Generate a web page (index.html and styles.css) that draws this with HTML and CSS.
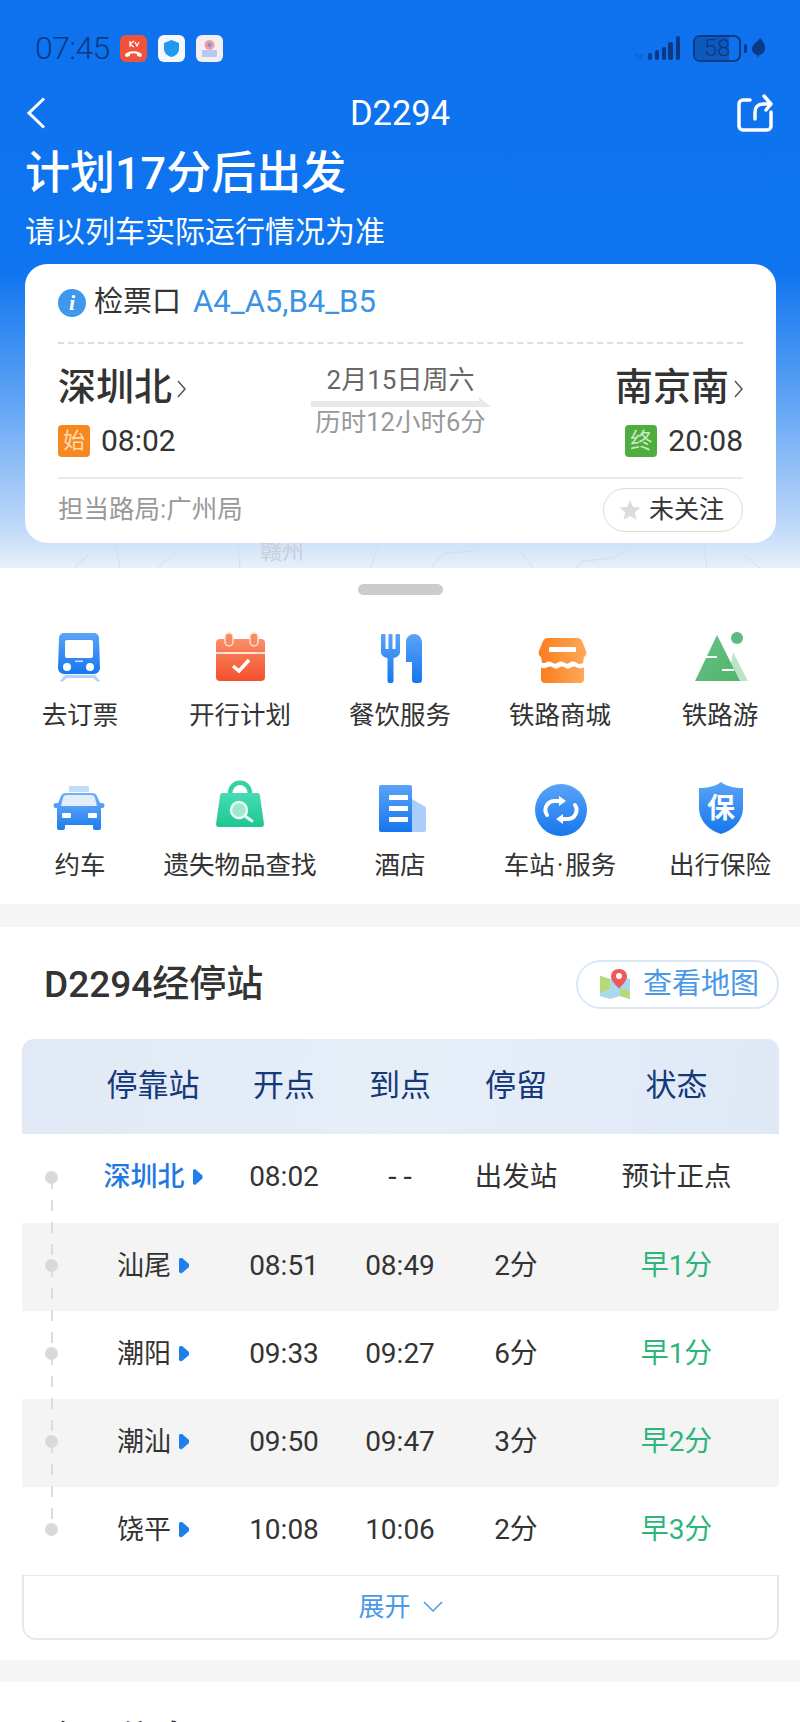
FILE: index.html
```html
<!DOCTYPE html>
<html lang="zh-CN">
<head>
<meta charset="utf-8">
<title>D2294</title>
<link rel="stylesheet" href="styles.css">
</head>
<body>
<div class="page">
  <div class="hero">
    <svg class="map-lines" width="800" height="26" viewBox="0 543 800 26">
      <path d="M74 568L97 547M115 543L120 568M158 568L184 543M238 543L240 568M380 543L370 568M431 568L444 553L474 551L477 543M515 543L533 568M576 568L581 562L615 557L638 543M704 543L707 568M730 543L760 568"/>
    </svg>
    <span class="map-city">赣州</span>

    <div class="status">
      <span class="clock">07:45</span>
      <svg class="app" width="27" height="27" viewBox="0 0 27 27"><rect width="27" height="27" rx="6" fill="#f0533a"/><path d="M10 6v6M14 6l-4 3 4 3M15 7l2 4 2-4" fill="none" stroke="#fff" stroke-width="1.2"/><path d="M5 20c2-5 15-5 17 0l-1 2-4-1v-2c-2-1-5-1-7 0v2l-4 1z" fill="#fff"/></svg>
      <svg class="app" width="27" height="27" viewBox="0 0 27 27"><rect width="27" height="27" rx="6" fill="#f4f8fd"/><path d="M13.5 5l7.5 3v6c0 4-3.500 7-7.500 8-4-1-7.500-4-7.500-8V8z" fill="#1e9bf0"/></svg>
      <svg class="app" width="27" height="27" viewBox="0 0 27 27"><rect width="27" height="27" rx="6" fill="#f4eef0"/><circle cx="13.500" cy="10" r="5" fill="#e8a0a8"/><circle cx="13.500" cy="10" r="2" fill="#7d8fd8"/><rect x="6" y="15" width="15" height="7" rx="1" fill="#b8c8ee"/></svg>
      <span class="status-space"></span>
      <svg class="signal" width="46" height="26" viewBox="0 0 46 26"><text x="0" y="24" class="signal-text">1s</text><g fill="#0a3a85"><rect x="13" y="18" width="4" height="7" rx="2"/><rect x="20" y="15" width="4" height="10" rx="2"/><rect x="27" y="12" width="4" height="13" rx="2"/><rect x="33" y="7" width="5" height="18" rx="2"/><rect x="41" y="1" width="4" height="24" rx="2"/></g></svg>
      <span class="battery"><span class="battery-fill"></span><span class="battery-num">58</span></span>
      <span class="battery-nub"></span>
      <svg class="leaf" width="13" height="20" viewBox="0 0 13 20"><path d="M8 0c3 3 5 6 5 10 0 4-3 7-6 7l-1 3-1-3c-3-1-5-3-5-6 0-5 5-6 8-11z" fill="#0a3a85"/></svg>
    </div>

    <div class="nav">
      <svg class="back" width="20" height="32" viewBox="0 0 20 32"><path d="M18 1.500L3 16l15 14.500" fill="none" stroke="#fff" stroke-width="3"/></svg>
      <span class="nav-title">D2294</span>
      <svg class="share" width="38" height="38" viewBox="0 0 38 38"><path d="M14 6H7a4 4 0 0 0-4 4v22a4 4 0 0 0 4 4h24a4 4 0 0 0 4-4V18" fill="none" stroke="#fff" stroke-width="3.500" stroke-linecap="round"/><path d="M19 25v-7c0-5 3-8 8-8h8M28 2l7 8-5 6" fill="none" stroke="#fff" stroke-width="3.500" stroke-linecap="round" stroke-linejoin="round"/></svg>
    </div>

    <h1 class="headline">计划17分后出发</h1>
    <p class="subline">请以列车实际运行情况为准</p>

    <section class="ticket">
      <div class="gate">
        <span class="info">i</span>
        <span class="gate-label">检票口</span>
        <span class="gate-value">A4_A5,B4_B5</span>
      </div>
      <div class="dash"></div>
      <div class="route">
        <div class="stop">
          <div class="stop-name">深圳北<svg class="stop-arrow" width="9" height="20" viewBox="0 0 9 20"><path d="M1 2l7 8-7 8" fill="none" stroke="#555" stroke-width="1.500"/></svg></div>
          <div class="stop-time"><span class="tag tag-start">始</span><span class="clock-time">08:02</span></div>
        </div>
        <div class="route-mid">
          <div class="route-date">2月15日周六</div>
          <svg class="route-arrow" width="180" height="10" viewBox="0 0 180 10"><polygon points="0,4 168,4 168,0 180,10 0,10" fill="#e8e8e8"/></svg>
          <div class="route-span">历时12小时6分</div>
        </div>
        <div class="stop stop-end">
          <div class="stop-name">南京南<svg class="stop-arrow" width="9" height="20" viewBox="0 0 9 20"><path d="M1 2l7 8-7 8" fill="none" stroke="#555" stroke-width="1.500"/></svg></div>
          <div class="stop-time"><span class="tag tag-end">终</span><span class="clock-time">20:08</span></div>
        </div>
      </div>
      <div class="rule"></div>
      <div class="ticket-foot">
        <span class="bureau">担当路局:广州局</span>
        <span class="follow"><svg width="22" height="22" viewBox="0 0 22 22"><path d="M11 1l3 7 7.500.6-5.700 4.900 1.800 7.500L11 17l-6.600 4 1.800-7.500L.5 8.600 8 8z" fill="#dcdcdc"/></svg>未关注</span>
      </div>
    </section>
  </div>

  <section class="sheet">
    <div class="handle"></div>
    <div class="services">
      <div class="service">
        <svg width="56" height="56" viewBox="0 0 56 56"><defs><linearGradient id="b1" x1="0" y1="0" x2="0" y2="1"><stop offset="0" stop-color="#5aa3f8"/><stop offset="1" stop-color="#1677ee"/></linearGradient></defs><path d="M13 45h30l5 6-2 1-5-4H15l-5 4-2-1z" fill="#b4d3f9"/><path d="M12 3h30a5 5 0 0 1 5 5l1 30a6 6 0 0 1-6 6H12a6 6 0 0 1-6-6l1-30a5 5 0 0 1 5-5z" fill="url(#b1)"/><rect x="13" y="10" width="28" height="18" rx="2" fill="#fff"/><circle cx="15" cy="37" r="4" fill="#fff"/><circle cx="38" cy="37" r="4" fill="#fff"/><rect x="23" y="30.500" width="8" height="1.500" fill="#cfe2fb"/></svg>
        <span>去订票</span>
      </div>
      <div class="service">
        <svg width="56" height="56" viewBox="0 0 56 56"><defs><linearGradient id="r1" x1="0" y1="0" x2="0" y2="1"><stop offset="0" stop-color="#f98f68"/><stop offset="1" stop-color="#f4502c"/></linearGradient></defs><rect x="4" y="9" width="49" height="42" rx="4" fill="url(#r1)"/><path d="M4 23h49" stroke="#ffe4da" stroke-width="2"/><rect x="13" y="3" width="8" height="13" rx="4" fill="#f88a62" stroke="#fde0d4" stroke-width="1.500"/><rect x="38" y="3" width="8" height="13" rx="4" fill="#f88a62" stroke="#fde0d4" stroke-width="1.500"/><path d="M21 36l6 5 10-11" fill="none" stroke="#fff" stroke-width="3.500"/></svg>
        <span>开行计划</span>
      </div>
      <div class="service">
        <svg width="56" height="56" viewBox="0 0 56 56"><defs><linearGradient id="b2" x1="0" y1="0" x2="0" y2="1"><stop offset="0" stop-color="#5aa3f8"/><stop offset="1" stop-color="#1677ee"/></linearGradient></defs><path d="M9 5a1 1 0 0 1 1-1h2.500a1 1 0 0 1 1 1v14h3V5a1 1 0 0 1 1-1h2a1 1 0 0 1 1 1v14h3V5a1 1 0 0 1 1-1H27a1 1 0 0 1 1 1v17c0 3-3 5.500-6.500 6v23a2 2 0 0 1-2 2h-2a2 2 0 0 1-2-2V28C12 27.500 9 25 9 22z" fill="url(#b2)"/><path d="M42 4c5 0 8 4 8 9v37a3 3 0 0 1-3 3h-4a3 3 0 0 1-3-3V32h-6V12c0-5 4-8 8-8z" fill="url(#b2)"/></svg>
        <span>餐饮服务</span>
      </div>
      <div class="service">
        <svg width="56" height="56" viewBox="0 0 56 56"><defs><linearGradient id="o1" x1="0" y1="0" x2="1" y2="0"><stop offset="0" stop-color="#fb7d1d"/><stop offset="1" stop-color="#fda95a"/></linearGradient></defs><path d="M15 8h31a5 5 0 0 1 4 3l4 10a5 5 0 0 1-2 6l-1 6c-3 1.500-5 1-7-.5s-4-1.500-6 0-4 1.500-6 0-4-1.500-6 0-4 1.500-6 0-4-1.500-6 0c-2 1-3 .5-4 0l-1-5.500a5 5 0 0 1-2-6l4-10a5 5 0 0 1 4-3z" fill="url(#o1)"/><path d="M9 37.500c2 1 4 1 6 0s4-1.500 6 0 4 1.500 6 0 4-1.500 6 0 4 1.500 6 0 4-1.500 6 0c2 1 4 1 7 0V49a4 4 0 0 1-4 4H13a4 4 0 0 1-4-4z" fill="url(#o1)"/><rect x="17" y="17" width="27" height="5" rx="1" fill="#fff"/></svg>
        <span>铁路商城</span>
      </div>
      <div class="service">
        <svg width="56" height="56" viewBox="0 0 56 56"><defs><linearGradient id="g1" x1="0" y1="0" x2="1" y2="1"><stop offset="0" stop-color="#6cc08a"/><stop offset="1" stop-color="#4eb56b"/></linearGradient></defs><path d="M41 22l15 29H36z" fill="#bfe3c8"/><path d="M25 5l23 46H3z" fill="url(#g1)"/><circle cx="45" cy="8" r="6" fill="#5cbb7e"/><path d="M13 27h12M30 40h12" stroke="#fff" stroke-width="2"/></svg>
        <span>铁路游</span>
      </div>
      <div class="service">
        <svg width="56" height="56" viewBox="0 0 56 56"><defs><linearGradient id="b3" x1="0" y1="0" x2="0" y2="1"><stop offset="0" stop-color="#73b0f8"/><stop offset="1" stop-color="#1b7cef"/></linearGradient></defs><rect x="17" y="6" width="20" height="6" fill="#c3dcfa"/><path d="M14 13h26a5 5 0 0 1 5 3l3 7h2a2.500 2.500 0 0 1 0 5h-1v20a2 2 0 0 1-2 2h-4a2 2 0 0 1-2-2v-3H13v3a2 2 0 0 1-2 2H7a2 2 0 0 1-2-2V28H4a2.500 2.500 0 0 1 0-5h2l3-7a5 5 0 0 1 5-3z" fill="url(#b3)"/><path d="M15 15h24a4 4 0 0 1 4 3l2 8H9l2-8a4 4 0 0 1 4-3z" fill="#e4edfb"/><rect x="10" y="33" width="9" height="5" rx="1" fill="#fff"/><rect x="36" y="33" width="9" height="5" rx="1" fill="#fff"/></svg>
        <span>约车</span>
      </div>
      <div class="service">
        <svg width="56" height="56" viewBox="0 0 56 56"><defs><linearGradient id="g2" x1="0" y1="0" x2="0" y2="1"><stop offset="0" stop-color="#44ddb4"/><stop offset="1" stop-color="#1fc690"/></linearGradient></defs><path d="M18 14c0-15 20-15 20 0" fill="none" stroke="#33d3a5" stroke-width="4.500"/><path d="M11 13h34a3 3 0 0 1 3 3l4 28a3 3 0 0 1-3 3H7a3 3 0 0 1-3-3l4-28a3 3 0 0 1 3-3z" fill="url(#g2)"/><circle cx="27" cy="30" r="8" fill="#9ee8d2" stroke="#e9fbf5" stroke-width="2.500"/><path d="M33 36l7 5" stroke="#e9fbf5" stroke-width="3" stroke-linecap="round"/></svg>
        <span>遗失物品查找</span>
      </div>
      <div class="service">
        <svg width="56" height="56" viewBox="0 0 56 56"><defs><linearGradient id="b4" x1="0" y1="0" x2="0" y2="1"><stop offset="0" stop-color="#5aa3f8"/><stop offset="1" stop-color="#1677ee"/></linearGradient></defs><path d="M40 19l12 7a3 3 0 0 1 2 3v21a2 2 0 0 1-2 2H40z" fill="#abcdf9"/><path d="M9 5h29a2 2 0 0 1 2 2v45H9a2 2 0 0 1-2-2V7a2 2 0 0 1 2-2z" fill="url(#b4)"/><path d="M17 15h19v5H17zM17 26h19v5H17zM17 37h19v5H17z" fill="#fff"/></svg>
        <span>酒店</span>
      </div>
      <div class="service">
        <svg width="56" height="56" viewBox="0 0 56 56"><defs><linearGradient id="b5" x1="0" y1="0" x2="0" y2="1"><stop offset="0" stop-color="#5aa3f8"/><stop offset="1" stop-color="#1677ee"/></linearGradient></defs><circle cx="29" cy="30" r="26" fill="url(#b5)"/><path d="M28 21h-6a9 9 0 0 0-7 14M30 39h6a9 9 0 0 0 7-14" fill="none" stroke="#fff" stroke-width="4" stroke-linecap="round"/><path d="M27 16l7 5-7 5zM31 34l-7 5 7 5z" fill="#fff"/></svg>
        <span>车站<i class="mid">·</i>服务</span>
      </div>
      <div class="service">
        <svg width="56" height="56" viewBox="0 0 56 56"><defs><linearGradient id="b6" x1="0" y1="0" x2="0" y2="1"><stop offset="0" stop-color="#5aa3f8"/><stop offset="1" stop-color="#1677ee"/></linearGradient></defs><path d="M29 2c5 4 13 6 22 6v20c0 12-9 22-22 26C16 50 7 40 7 28V8c9 0 17-2 22-6z" fill="url(#b6)"/><text x="29" y="38" class="shield-text">保</text></svg>
        <span>出行保险</span>
      </div>
    </div>
  </section>

  <div class="band"></div>

  <section class="stops">
    <div class="stops-head">
      <h2 class="section-title">D2294经停站</h2>
      <span class="map-pill">
        <svg width="34" height="34" viewBox="0 0 34 34"><path d="M2 8l10 3 10-3 10 3v20l-10-3-10 3-10-3z" fill="#a9d9ee"/><path d="M2 8l10 3v10L2 25z" fill="#b7d97a"/><path d="M22 20l10 3v8l-10-3z" fill="#b7d97a"/><path d="M21 1c5 0 8 3.500 8 7.500 0 4-4 8-8 12-4-4-8-8-8-12C13 4.500 16 1 21 1z" fill="#ec5a5a"/><circle cx="21" cy="8" r="3" fill="#fff"/></svg>
        查看地图
      </span>
    </div>

    <div class="table">
      <div class="row row-head">
        <span></span><span>停靠站</span><span>开点</span><span>到点</span><span>停留</span><span>状态</span>
      </div>
      <div class="rows">
        <div class="rail"></div>
        <div class="row row-first">
          <i class="dot"></i><span class="st st-now">深圳北<b class="tri"></b></span><span>08:02</span><span class="nil">--</span><span class="note">出发站</span><span class="note">预计正点</span>
        </div>
        <div class="row row-alt">
          <i class="dot"></i><span class="st">汕尾<b class="tri"></b></span><span>08:51</span><span>08:49</span><span>2分</span><span class="early">早1分</span>
        </div>
        <div class="row">
          <i class="dot"></i><span class="st">潮阳<b class="tri"></b></span><span>09:33</span><span>09:27</span><span>6分</span><span class="early">早1分</span>
        </div>
        <div class="row row-alt">
          <i class="dot"></i><span class="st">潮汕<b class="tri"></b></span><span>09:50</span><span>09:47</span><span>3分</span><span class="early">早2分</span>
        </div>
        <div class="row">
          <i class="dot"></i><span class="st">饶平<b class="tri"></b></span><span>10:08</span><span>10:06</span><span>2分</span><span class="early">早3分</span>
        </div>
      </div>
      <div class="expand">展开<svg width="20" height="12" viewBox="0 0 20 12"><path d="M1 1l9 9 9-9" fill="none" stroke="#4a98e6" stroke-width="1.500"/></svg></div>
    </div>
  </section>

  <div class="band band-2"></div>

  <section class="next">
    <h2 class="section-title">余票信息</h2>
  </section>
</div>
</body>
</html>
```
FILE: styles.css
```css
* { box-sizing: border-box; }
html, body { margin: 0; padding: 0; background: #fff; }
body { font-family: Roboto, "Noto Sans CJK SC", sans-serif; color: #333; }
.page {
  position: relative;
  width: 800px;
  height: 1722px;
  overflow: hidden;
  background: #fff;
}
.hero {
  position: relative;
  height: 568px;
  padding-top: 30px;
  background: linear-gradient(180deg, #0e72ef 0, #0f74ef 270px, #62a5f5 405px, #c2daf8 530px, #e8f0fa 568px);
}
.map-lines { position: absolute; left: 0; top: 543px; }
.map-lines path { fill: none; stroke: #d3deeb; stroke-width: 1; }
.map-city {
  position: absolute;
  left: 260px;
  top: 537px;
  font-size: 22px;
  line-height: 30px;
  color: #c6d0dc;
}

.status { display: flex; align-items: center; height: 36px; padding: 0 35px; gap: 11px; }
.clock { font-size: 32px; font-weight: 300; letter-spacing: -.6px; line-height: 36px; color: #0a3a85; width: 74px; white-space: nowrap; }
.status-space { flex: 1; }
.signal-text { font-size: 7px; fill: #0a3a85; opacity: .6; }
.signal { margin-right: 1px; }
.battery {
  position: relative;
  display: block;
  width: 48px;
  height: 27px;
  border: 2.500px solid #0a3a85;
  border-radius: 7px;
}
.battery-fill { position: absolute; left: 0; top: 0; bottom: 0; width: 78%; border-radius: 4px 0 0 4px; background: #0d59bd; }
.battery-num {
  position: absolute;
  left: 0; right: 0; top: -2px;
  text-align: center;
  font-size: 24px;
  font-weight: 300;
  line-height: 26px;
  color: #0a3a85;
}
.battery-nub { width: 3px; height: 9px; border-radius: 2px; background: #0a3a85; margin-left: -8px; }
.leaf { margin-left: -6px; }

.nav {
  display: grid;
  grid-template-columns: 1fr auto 1fr;
  align-items: center;
  height: 46px;
  margin-top: 24px;
  padding: 0 26px 0 26px;
}
.nav-title { font-size: 34.500px; font-weight: 400; line-height: 46px; color: #fff; }
.share { justify-self: end; }

.headline { margin: 13px 0 0 25px; font-size: 45px; line-height: 50px; font-weight: 500; color: #fff; }
.subline { margin: 15px 0 0 25px; font-size: 30px; line-height: 36px; color: #fff; }

.ticket {
  position: relative;
  z-index: 1;
  height: 279px;
  margin: 14px 24px 0 25px;
  padding: 20px 33px 0;
  background: #fff;
  border-radius: 22px;
}
.gate { display: flex; align-items: center; height: 36px; font-size: 29px; line-height: 36px; }
.info {
  width: 28px;
  height: 28px;
  margin: 2px 8px 0 0;
  border-radius: 50%;
  background: #3f97ee;
  color: #fff;
  font: italic bold 22px/28px "Liberation Serif", serif;
  text-align: center;
}
.gate-label { color: #333; }
.gate-value { margin-left: 12px; color: #3b93e6; font-size: 31px; }
.dash { margin-top: 22px; height: 2px; border-top: 2px dashed #dedede; }
.route { display: grid; grid-template-columns: 1fr auto 1fr; padding-top: 21px; }
.stop-name {
  display: flex;
  align-items: center;
  gap: 5px;
  height: 44px;
  font-size: 38px;
  font-weight: 500;
  line-height: 44px;
  color: #333;
}
.stop-arrow { margin-top: 4px; }
.stop-time { display: flex; align-items: center; gap: 11px; margin-top: 16px; height: 32px; }
.stop-end { display: flex; flex-direction: column; align-items: flex-end; }
.tag {
  display: block;
  width: 32px;
  height: 32px;
  border-radius: 4px;
  text-align: center;
  font-size: 22px;
  line-height: 31px;
}
.tag-start { background: #f7881f; color: #ffdcae; }
.tag-end { background: #4fac3f; color: #c8ecc0; }
.clock-time { font-size: 30px; line-height: 32px; color: #333; }
.route-mid { display: flex; flex-direction: column; align-items: center; }
.route-date { font-size: 26px; line-height: 30px; color: #666; }
.route-arrow { display: block; margin-top: 2px; }
.route-span { font-size: 25.500px; line-height: 30px; color: #999; }
.rule { margin-top: 20px; height: 2px; background: #e9e9e9; }
.ticket-foot { display: flex; justify-content: space-between; align-items: flex-start; padding-top: 9px; }
.bureau { font-size: 25.500px; line-height: 42px; color: #999; }
.follow {
  display: flex;
  align-items: center;
  gap: 8px;
  width: 140px;
  height: 44px;
  padding-left: 15px;
  border: 1px solid #dcdcdc;
  border-radius: 22px;
  font-size: 25px;
  line-height: 42px;
  color: #333;
}

.sheet {
  position: relative;
  z-index: 2;
  height: 336px;
  padding-top: 16px;
  background: #fff;
  border-radius: 24px 24px 0 0;
}
.handle { width: 85px; height: 11px; margin: 0 auto; border-radius: 6px; background: #cccccc; }
.services {
  display: grid;
  grid-template-columns: repeat(5, 160px);
  row-gap: 48px;
  margin-top: 35px;
}
.service { display: flex; flex-direction: column; align-items: center; gap: 11px; }
.service svg { display: block; margin-bottom: 1px; }
.service span { font-size: 25.500px; line-height: 34px; color: #333; white-space: nowrap; }
.mid { font-style: normal; padding: 0 2px; }
.shield-text { font-size: 28px; font-weight: 700; fill: #fff; text-anchor: middle; font-family: "Noto Sans CJK SC", sans-serif; }

.band { height: 23px; background: #f5f5f5; }
.band-2 { height: 22px; }

.stops { height: 733px; padding: 33px 21px 0 22px; }
.stops-head { display: flex; justify-content: space-between; align-items: center; height: 49px; }
.section-title { margin: 0 0 0 22px; font-size: 37px; font-weight: 500; line-height: 50px; color: #333; white-space: nowrap; }
.map-pill {
  display: flex;
  align-items: center;
  gap: 11px;
  width: 203px;
  height: 49px;
  padding-left: 20px;
  border: 2px solid #dbe8f6;
  border-radius: 25px;
  font-size: 29px;
  line-height: 45px;
  color: #4a98e6;
}
.table { margin-top: 30px; }
.row {
  display: grid;
  grid-template-columns: 58px 146px 116px 116px 116px 205px;
  align-items: center;
  justify-items: center;
  height: 88px;
  padding-bottom: 3px;
  font-size: 28px;
  line-height: 40px;
  color: #333;
}
.row-first { height: 89px; }
.row-alt { background: #f4f4f4; }
.row-head {
  height: 95px;
  padding-bottom: 2px;
  border-radius: 12px 12px 0 0;
  background: linear-gradient(100deg, #e0e9f5, #e6eef8 50%, #dfe9f6);
  font-size: 31px;
  font-weight: 400;
  color: #14387a;
}
.rows { position: relative; }
.rail {
  position: absolute;
  left: 29px;
  top: 44px;
  width: 2px;
  height: 352px;
  background: repeating-linear-gradient(180deg, #dcdcdc 0 11px, transparent 11px 22px);
}
.dot {
  position: relative;
  z-index: 1;
  justify-self: start;
  width: 13px;
  height: 13px;
  margin-left: 23px;
  border-radius: 50%;
  background: #d9d9d9;
}
.note { font-size: 27.500px; }
.nil { font-size: 30px; letter-spacing: 7px; margin-right: -7px; }
.st { display: flex; align-items: center; gap: 8px; font-size: 27px; }
.st-now { color: #1f7ae0; font-weight: 500; }
.tri {
  display: block;
  width: 10px;
  height: 16px;
  background: #1e80ea;
  clip-path: polygon(0 8%, 25% 0, 100% 40%, 100% 60%, 25% 100%, 0 92%);
}
.early { color: #2db57c; }
.expand {
  display: flex;
  justify-content: center;
  align-items: center;
  gap: 12px;
  height: 65px;
  border: 2px solid #e8e8e8;
  border-top-width: 1px;
  border-radius: 0 0 14px 14px;
  font-size: 26px;
  line-height: 40px;
  color: #4a98e6;
}

.next { padding: 34px 0 0 22px; }
```
